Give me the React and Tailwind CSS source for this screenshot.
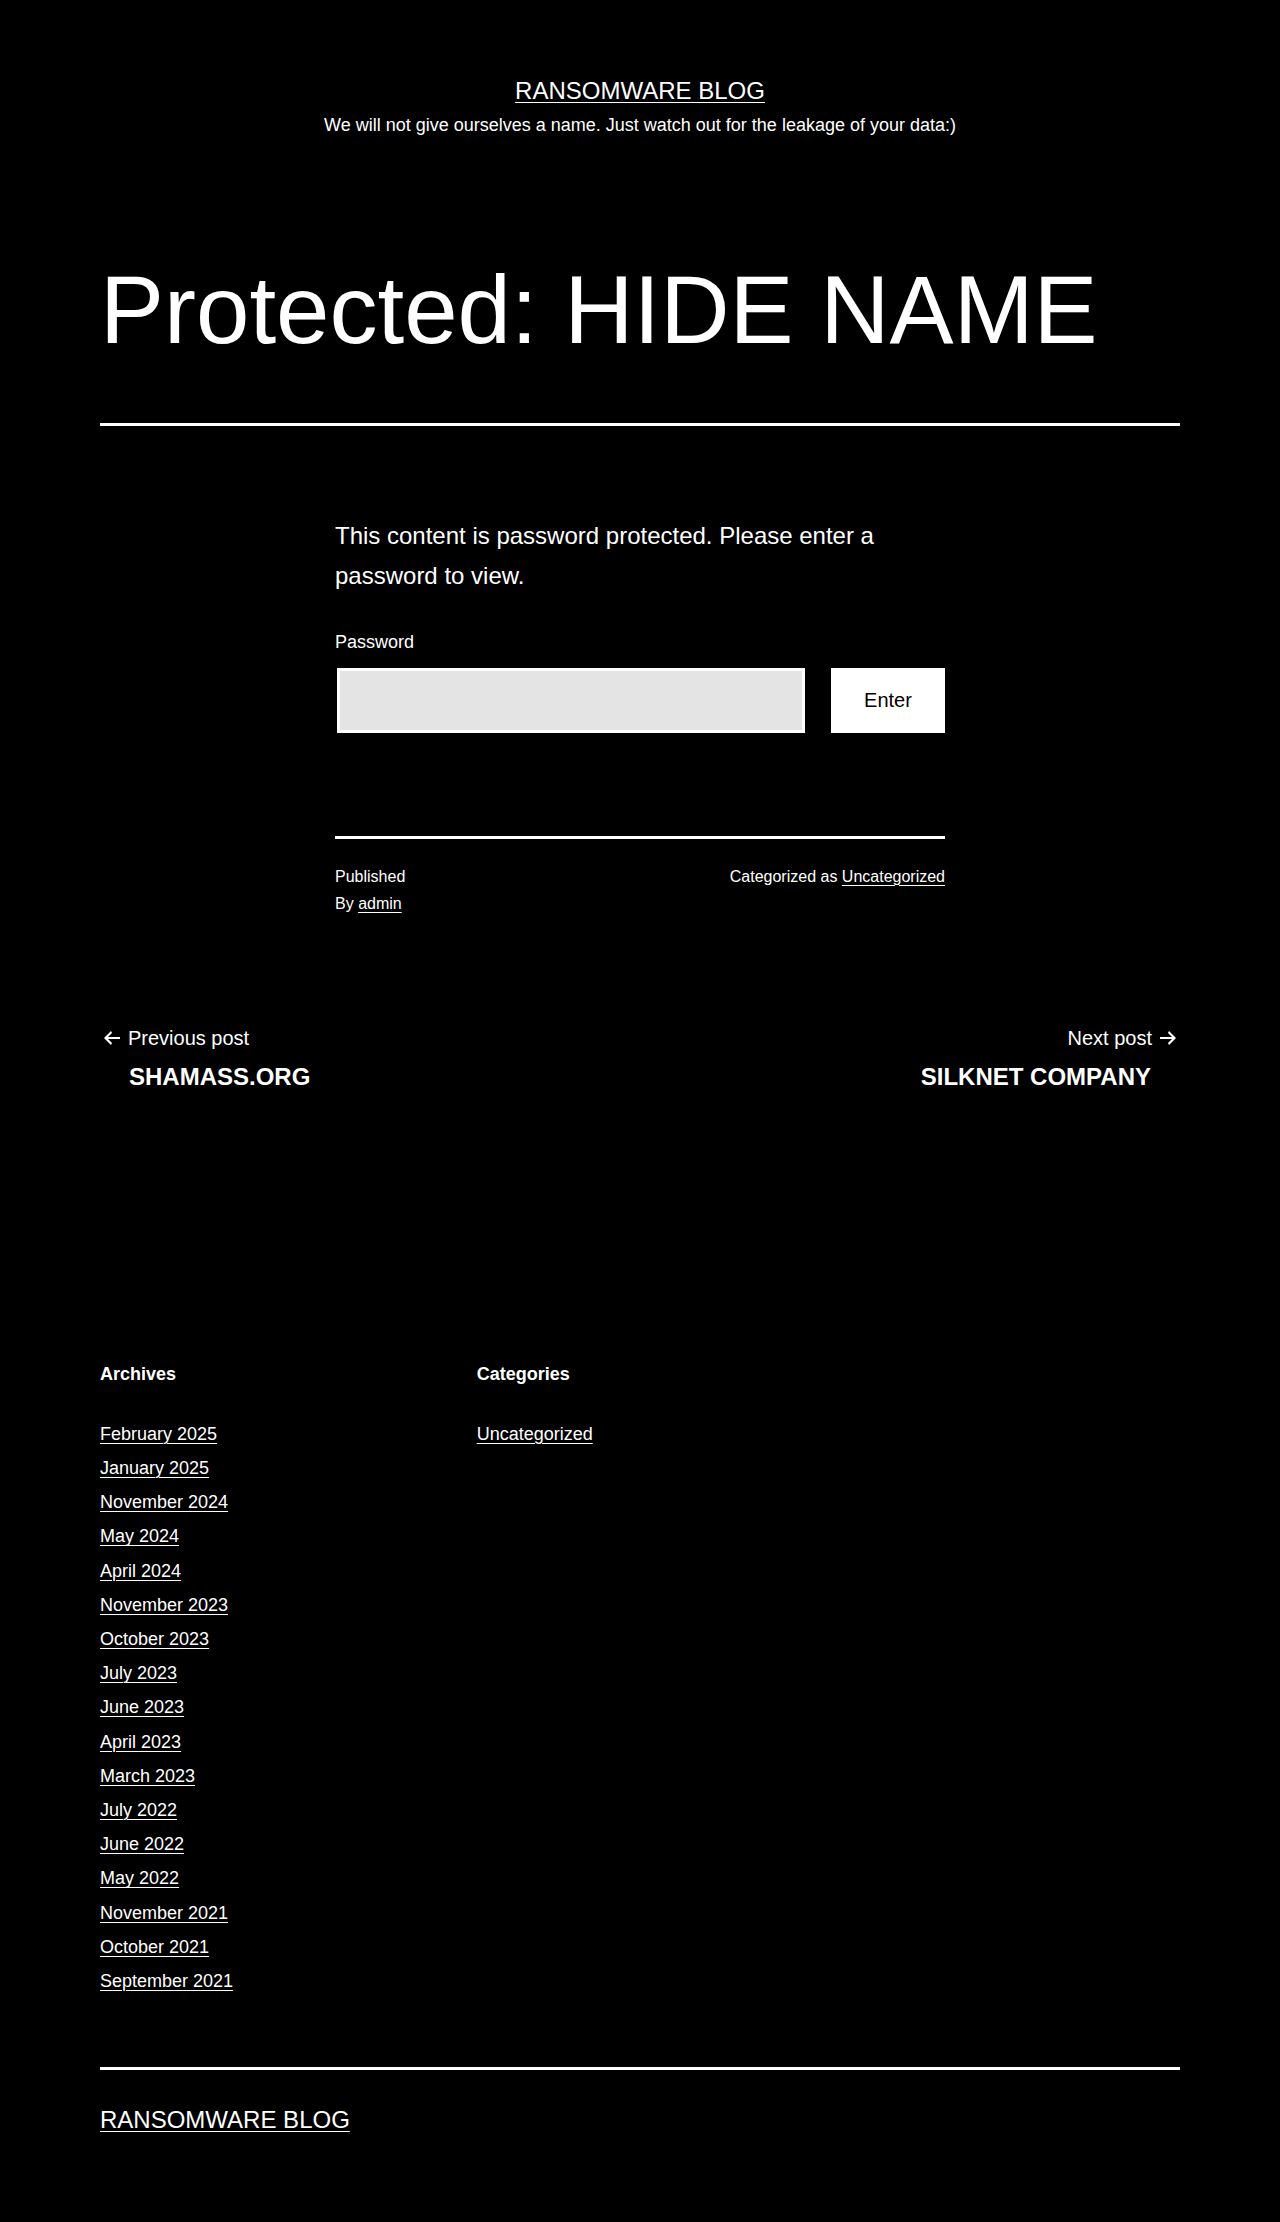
import React from "react";

const archives = [
  "February 2025",
  "January 2025",
  "November 2024",
  "May 2024",
  "April 2024",
  "November 2023",
  "October 2023",
  "July 2023",
  "June 2023",
  "April 2023",
  "March 2023",
  "July 2022",
  "June 2022",
  "May 2022",
  "November 2021",
  "October 2021",
  "September 2021",
];

const link = "underline decoration-1 underline-offset-[3px]";

function ArrowLeft() {
  return (
    <svg viewBox="0 0 24 24" width="24" height="24" className="shrink-0">
      <path fillRule="evenodd" clipRule="evenodd" d="M20 13v-2H8l4-4-1-2-7 7 7 7 1-2-4-4z" fill="currentColor" />
    </svg>
  );
}

function ArrowRight() {
  return (
    <svg viewBox="0 0 24 24" width="24" height="24" className="shrink-0">
      <path fillRule="evenodd" clipRule="evenodd" d="m4 13v-2h12l-4-4 1-2 7 7-7 7-1-2 4-4z" fill="currentColor" />
    </svg>
  );
}

export default function App() {
  return (
    <div className="min-h-[2222px] bg-black text-white font-['Liberation_Sans',Arial,sans-serif]">
      <header className="pt-[75px] text-center">
        <p className="text-[24px] leading-[31px]">
          <a href="#" className={link}>RANSOMWARE BLOG</a>
        </p>
        <p className="mt-[7px] text-[18px] leading-[25px]">
          We will not give ourselves a name. Just watch out for the leakage of your data:)
        </p>
      </header>

      <main className="mx-auto w-[1080px]">
        <div className="mt-[119px] border-b-[3px] border-white pb-[60px]">
          <h1 className="text-[96px] leading-[1.1]">Protected: HIDE NAME</h1>
        </div>

        <div className="mx-auto w-[610px]">
          <p className="mt-[90px] text-[24px] leading-[1.7]">
            This content is password protected. Please enter a password to view.
          </p>
          <label className="mt-[30px] block text-[18px] leading-[1.7]">Password</label>
          <div className="mt-[10px] flex">
            <input type="password" className="ml-[2px] h-[65px] w-[468px] border-[3px] border-white bg-[#e4e4e4] outline-none" />
            <button className="ml-auto h-[65px] w-[114px] bg-white text-[20px] text-black">Enter</button>
          </div>

          <div className="mt-[103px] h-[3px] bg-white" />
          <div className="mt-[24px] flex justify-between text-[16px] leading-[1.7]">
            <div>
              <div>Published</div>
              <div>By <a href="#" className={link}>admin</a></div>
            </div>
            <div>
              Categorized as <a href="#" className={link}>Uncategorized</a>
            </div>
          </div>
        </div>

        <nav className="mt-[104px] flex justify-between">
          <div>
            <div className="flex items-center gap-[4px] text-[20px] leading-[1.7]">
              <ArrowLeft />
              <span>Previous post</span>
            </div>
            <div className="mt-[6px] pl-[29px] text-[24px] font-bold leading-[1.3]">SHAMASS.ORG</div>
          </div>
          <div className="text-right">
            <div className="flex items-center justify-end gap-[4px] text-[20px] leading-[1.7]">
              <span>Next post</span>
              <ArrowRight />
            </div>
            <div className="mt-[6px] pr-[29px] text-[24px] font-bold leading-[1.3]">SILKNET COMPANY</div>
          </div>
        </nav>

        <footer className="mt-[271px]">
          <div className="grid grid-cols-3 gap-x-[50px]">
            <section>
              <h2 className="text-[18px] font-bold leading-[1.3]">Archives</h2>
              <ul className="mt-[30px] text-[18px] leading-[34.2px]">
                {archives.map((a) => (
                  <li key={a}>
                    <a href="#" className={link}>{a}</a>
                  </li>
                ))}
              </ul>
            </section>
            <section>
              <h2 className="text-[18px] font-bold leading-[1.3]">Categories</h2>
              <ul className="mt-[30px] text-[18px] leading-[34.2px]">
                <li>
                  <a href="#" className={link}>Uncategorized</a>
                </li>
              </ul>
            </section>
          </div>

          <div className="mt-[69px] h-[3px] bg-white" />
          <p className="mt-[34px] pb-[84px] text-[24px] leading-[1.3]">
            <a href="#" className={link}>RANSOMWARE BLOG</a>
          </p>
        </footer>
      </main>
    </div>
  );
}
